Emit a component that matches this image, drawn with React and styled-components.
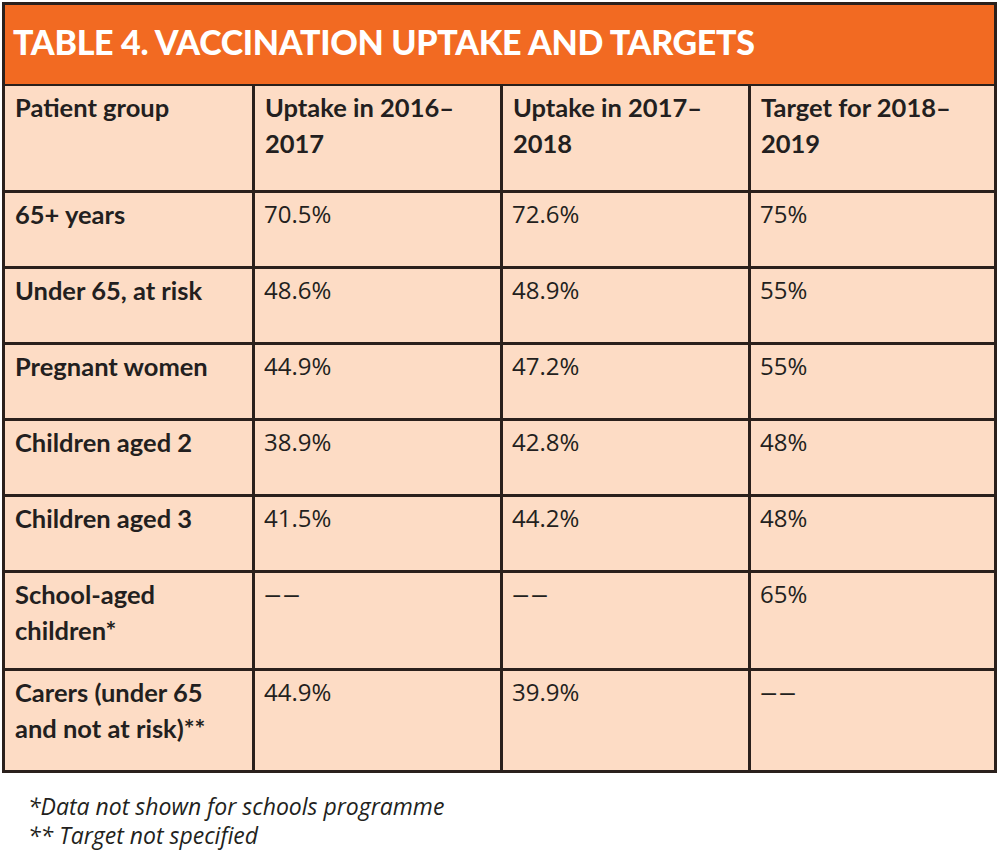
import React from "react";
import styled, { createGlobalStyle } from "styled-components";

const Global = createGlobalStyle`
  html, body { margin: 0; padding: 0; background: #ffffff; }
  body { font-family: "Open Sans", "Liberation Sans", sans-serif; color: #231f20; }
`;

const Page = styled.div`
  padding: 2px 0 0 2px;
  width: 1000px;
  box-sizing: border-box;
`;

const Table = styled.table`
  width: 995px;
  table-layout: fixed;
  border-collapse: separate;
  border-spacing: 0;
  border: 3px solid #2a201c;
  background: #fddcc5;
`;

const TitleCell = styled.th`
  height: 81px;
  padding: 0 0 7px 8px;
  box-sizing: border-box;
  background: #f26a22;
  color: #ffffff;
  text-align: left;
  vertical-align: middle;
  font-family: Lato, "Open Sans", sans-serif;
  font-weight: 900;
  font-size: 34px;
  letter-spacing: -0.3px;
  border-bottom: 2px solid #2a201c;
`;

const Cell = styled.td`
  height: ${(p) => p.$h}px;
  box-sizing: border-box;
  padding: 3px 9px 0 ${(p) => (p.$bold ? 10 : 9)}px;
  vertical-align: top;
  text-align: left;
  line-height: 36px;
  border-right: ${(p) => (p.$last ? "none" : "3px solid #2a201c")};
  border-bottom: ${(p) => (p.$lastRow ? "none" : "3px solid #2a201c")};
  font-family: ${(p) => (p.$bold ? 'Lato, "Open Sans", sans-serif' : '"Open Sans", "Liberation Sans", sans-serif')};
  font-weight: ${(p) => (p.$bold ? 700 : 400)};
  font-size: ${(p) => (p.$bold ? "25.5px" : "24px")};
  color: #231f20;
`;

const Dash = styled.span`
  display: inline-block;
  transform: scaleX(1.45);
  transform-origin: left center;
  letter-spacing: 1px;
`;

const Notes = styled.div`
  padding: 19px 0 0 26px;
  font-family: "Open Sans", "Liberation Sans", sans-serif;
  font-style: italic;
  font-size: 23px;
  line-height: 29px;
  color: #231f20;
`;

const header = ["Patient group", "Uptake in 2016–2017", "Uptake in 2017–2018", "Target for 2018–2019"];

const NA = "NA";

const rows = [
  { h: 76, cells: ["65+ years", "70.5%", "72.6%", "75%"] },
  { h: 76, cells: ["Under 65, at risk", "48.6%", "48.9%", "55%"] },
  { h: 76, cells: ["Pregnant women", "44.9%", "47.2%", "55%"] },
  { h: 76, cells: ["Children aged 2", "38.9%", "42.8%", "48%"] },
  { h: 76, cells: ["Children aged 3", "41.5%", "44.2%", "48%"] },
  { h: 98, cells: ["School-aged children*", NA, NA, "65%"] },
  { h: 99, cells: ["Carers (under 65 and not at risk)**", "44.9%", "39.9%", NA] },
];

export default function App() {
  return (
    <Page>
      <Global />
      <Table>
        <colgroup>
          <col style={{ width: "250px" }} />
          <col style={{ width: "248px" }} />
          <col style={{ width: "248px" }} />
          <col />
        </colgroup>
        <thead>
          <tr>
            <TitleCell colSpan={4}>TABLE 4. VACCINATION UPTAKE AND TARGETS</TitleCell>
          </tr>
        </thead>
        <tbody>
          <tr>
            {header.map((t, i) => (
              <Cell key={i} $h={107} $bold $last={i === 3}>
                {t}
              </Cell>
            ))}
          </tr>
          {rows.map((r, ri) => (
            <tr key={ri}>
              {r.cells.map((t, i) => (
                <Cell key={i} $h={r.h} $bold={i === 0} $last={i === 3} $lastRow={ri === rows.length - 1}>
                  {t === NA ? <Dash>––</Dash> : t}
                </Cell>
              ))}
            </tr>
          ))}
        </tbody>
      </Table>
      <Notes>
        <div>*Data not shown for schools programme</div>
        <div>** Target not specified</div>
      </Notes>
    </Page>
  );
}
